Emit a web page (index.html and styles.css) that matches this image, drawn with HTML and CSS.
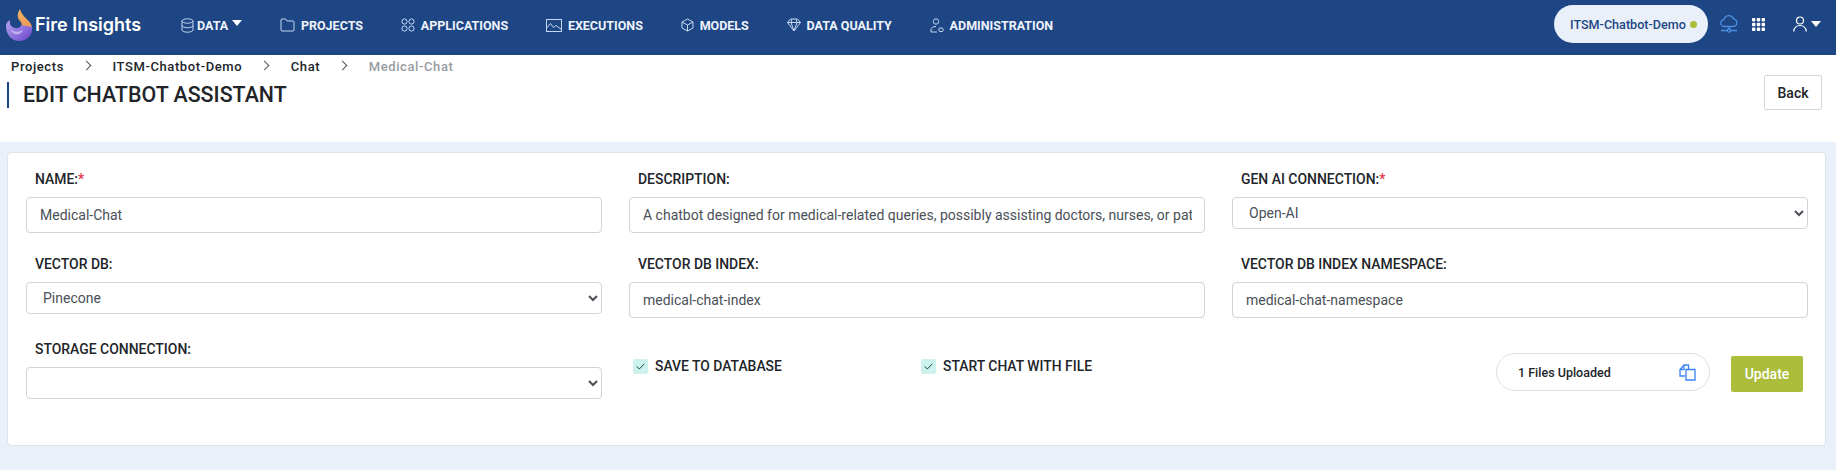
FILE: index.html
```html
<!DOCTYPE html>
<html lang="en">
<head>
<meta charset="utf-8">
<title>Fire Insights</title>
<link rel="stylesheet" href="styles.css">
</head>
<body>
<nav class="navbar">
  <a class="brand">
    <svg class="brand-mark" width="28" height="34" viewBox="0 0 28 34">
      <defs>
        <linearGradient id="fl" x1="0" y1="0" x2="0" y2="1"><stop offset="0" stop-color="#f5b65f"/><stop offset="1" stop-color="#e8935a"/></linearGradient>
        <linearGradient id="pu" x1="0" y1="0" x2="1" y2="1"><stop offset="0" stop-color="#b9a5f2"/><stop offset="1" stop-color="#6a45c9"/></linearGradient>
      </defs>
      <path d="M15 1c-3 5-3 9 0 12 3 3 2 7-1 9 6 1 13 1 13-1 1-8-10-11-12-20z" fill="url(#fl)"/>
      <path d="M1 18c0-3 2-5 4-6-1 4 1 7 5 8 3 1 6-1 6-3l11 2c1 8-5 14-13 14C6 33 1 26 1 18z" fill="url(#pu)"/>
      <path d="M5 21c3 3 8 4 13 1-2 5-9 7-13-1z" fill="#d3c6f7" opacity=".75"/>
    </svg>
    <span class="brand-name">Fire Insights</span>
  </a>
  <ul class="nav-menu">
    <li class="nav-item nav-item-data">
      <svg class="nav-icon" width="13" height="15" viewBox="0 0 13 15"><ellipse cx="6.5" cy="3" rx="5.5" ry="2.2"/><path d="M1 3v9c0 1.3 2.5 2.2 5.5 2.2S12 13.300 12 12V3M1 7.500c0 1.300 2.500 2.200 5.500 2.200S12 8.800 12 7.500"/></svg>
      <span>DATA</span><i class="caret caret-data"></i>
    </li>
    <li class="nav-item">
      <svg class="nav-icon" width="15" height="14" viewBox="0 0 15 14"><path d="M1 3V2q0-1 1-1h3.500l1.500 2h6q1 0 1 1v8q0 1-1 1H2q-1 0-1-1z"/></svg>
      <span>PROJECTS</span>
    </li>
    <li class="nav-item">
      <svg class="nav-icon" width="14" height="14" viewBox="0 0 14 14"><circle cx="3.500" cy="3.500" r="2.600"/><circle cx="10.500" cy="3.500" r="2.600"/><circle cx="3.500" cy="10.500" r="2.600"/><circle cx="10.500" cy="10.500" r="2.600"/></svg>
      <span>APPLICATIONS</span>
    </li>
    <li class="nav-item">
      <svg class="nav-icon" width="16" height="13" viewBox="0 0 16 13"><rect x=".5" y=".5" width="15" height="12"/><path d="M.5 9l4-4.500 3 4 2.500-2 5.500 4"/></svg>
      <span>EXECUTIONS</span>
    </li>
    <li class="nav-item">
      <svg class="nav-icon" width="13" height="14" viewBox="0 0 13 14"><path d="M6.500 1l5.500 3v6l-5.500 3L1 10V4zM1 4l5.500 3L12 4M6.500 7v6"/></svg>
      <span>MODELS</span>
    </li>
    <li class="nav-item">
      <svg class="nav-icon" width="14" height="14" viewBox="0 0 14 14"><path d="M3.500 1h7L13.500 4.500 7 13 .5 4.500zM.5 4.500h13M5 1L4 4.500 7 13l3-8.500L9 1"/></svg>
      <span>DATA QUALITY</span>
    </li>
    <li class="nav-item">
      <svg class="nav-icon" width="14" height="15" viewBox="0 0 14 15"><circle cx="6" cy="3.500" r="2.700"/><path d="M1 14v-2q0-3.500 5-3.500M1 14h6"/><rect x="9" y="10" width="4" height="3.500" rx="1"/></svg>
      <span>ADMINISTRATION</span>
    </li>
  </ul>
  <div class="nav-right">
    <div class="project-pill"><span>ITSM-Chatbot-Demo</span><i class="status-dot"></i></div>
    <svg class="cloud" width="18" height="20" viewBox="0 0 18 20"><path d="M5 12.500H4.500a3.500 3.500 0 0 1-.5-7A5 5 0 0 1 13.500 4.800a3.900 3.900 0 0 1 0 7.700H13"/><path d="M5 12.500h8M9 12.500V16M1 16.500h6M11 16.500h6"/><circle cx="9" cy="16.500" r="1.600"/></svg>
    <svg class="apps" width="13" height="13" viewBox="0 0 13 13"><g fill="#fff"><rect width="3.400" height="3.400" rx=".8"/><rect x="4.800" width="3.400" height="3.400" rx=".8"/><rect x="9.600" width="3.400" height="3.400" rx=".8"/><rect y="4.800" width="3.400" height="3.400" rx=".8"/><rect x="4.800" y="4.800" width="3.400" height="3.400" rx=".8"/><rect x="9.600" y="4.800" width="3.400" height="3.400" rx=".8"/><rect y="9.600" width="3.400" height="3.400" rx=".8"/><rect x="4.800" y="9.600" width="3.400" height="3.400" rx=".8"/><rect x="9.600" y="9.600" width="3.400" height="3.400" rx=".8"/></g></svg>
    <div class="user">
      <svg width="14" height="16" viewBox="0 0 14 16"><circle cx="7" cy="4.500" r="3.500"/><path d="M.7 15.500c.5-4 3-6 6.300-6s5.800 2 6.300 6"/></svg>
      <i class="caret"></i>
    </div>
  </div>
</nav>

<header class="page-head">
  <ol class="crumbs">
    <li>Projects</li>
    <li>ITSM-Chatbot-Demo</li>
    <li>Chat</li>
    <li class="current">Medical-Chat</li>
  </ol>
  <div class="title-row">
    <h1>EDIT CHATBOT ASSISTANT</h1>
    <button class="btn-back" type="button">Back</button>
  </div>
</header>

<main class="content">
  <form class="card">
    <div class="field">
      <label>NAME:<b>*</b></label>
      <input class="control tall" type="text" value="Medical-Chat">
    </div>
    <div class="field">
      <label>DESCRIPTION:</label>
      <input class="control tall" type="text" value="A chatbot designed for medical-related queries, possibly assisting doctors, nurses, or patients with information.">
    </div>
    <div class="field">
      <label>GEN AI CONNECTION:<b>*</b></label>
      <select class="control"><option>Open-AI</option></select>
    </div>
    <div class="field">
      <label>VECTOR DB:</label>
      <select class="control"><option>Pinecone</option></select>
    </div>
    <div class="field">
      <label>VECTOR DB INDEX:</label>
      <input class="control tall" type="text" value="medical-chat-index">
    </div>
    <div class="field">
      <label>VECTOR DB INDEX NAMESPACE:</label>
      <input class="control tall" type="text" value="medical-chat-namespace">
    </div>
    <div class="field">
      <label>STORAGE CONNECTION:</label>
      <select class="control"><option></option></select>
    </div>
    <div class="checks">
      <div class="check"><span class="box"><svg width="9" height="7" viewBox="0 0 9 7"><path d="M.7 3.500l2.600 2.500L8.300.8"/></svg></span><span>SAVE TO DATABASE</span></div>
      <div class="check"><span class="box"><svg width="9" height="7" viewBox="0 0 9 7"><path d="M.7 3.500l2.600 2.500L8.300.8"/></svg></span><span>START CHAT WITH FILE</span></div>
    </div>
    <div class="actions">
      <div class="files">
        <span>1 Files Uploaded</span>
        <svg width="17" height="17" viewBox="0 0 17 17"><path d="M6 12H1V5.500L5 1h4.500v4"/><path d="M1 5.500h4V1"/><path d="M7 5.500h4l1 0h4V16H7z"/></svg>
      </div>
      <button class="btn-update" type="button">Update</button>
    </div>
  </form>
</main>
</body>
</html>
```

FILE: styles.css
```css
* { box-sizing: border-box; }
html, body { margin: 0; height: 100%; }
body {
  background: #eaf0f9;
  font-family: Roboto, "Liberation Sans", sans-serif;
  color: #212529;
  overflow: hidden;
}

/* top bar */
.navbar {
  height: 55px;
  background: #1e4684;
  display: flex;
  align-items: center;
  padding: 0 15px 0 5px;
  color: #fff;
}
.brand { display: flex; align-items: center; width: 176px; height: 100%; padding-bottom: 6px; }
.brand-mark { flex: none; }
.brand-name {
  margin-left: 2px;
  font-family: Inter, "Open Sans", sans-serif;
  font-weight: 600;
  font-size: 18px;
  white-space: nowrap;
}
.nav-menu {
  list-style: none;
  margin: 0;
  padding: 0 0 5px;
  display: flex;
  align-items: center;
  gap: 37.8px;
}
.nav-item {
  display: flex;
  align-items: center;
  gap: 6px;
  font-size: 12.5px;
  font-weight: 700;
  white-space: nowrap;
  color: #eef3fb;
}
.nav-item-data { gap: 3px; }
.nav-icon { fill: none; stroke: #c4d8f2; stroke-width: 1; flex: none; }
.caret {
  display: inline-block;
  width: 0; height: 0;
  border-left: 5px solid transparent;
  border-right: 5px solid transparent;
  border-top: 6px solid #fff;
}
.caret-data { margin: 0 0 4px 1px; }
.nav-right { margin-left: auto; display: flex; align-items: center; padding-bottom: 7px; }
.project-pill {
  width: 154px;
  height: 38px;
  border-radius: 19px;
  background: #eaf0f9;
  color: #1e4684;
  font-size: 12.6px;
  font-weight: 500;
  display: flex;
  align-items: center;
  padding-left: 16px;
  gap: 4px;
  white-space: nowrap;
}
.status-dot { width: 7px; height: 7px; border-radius: 50%; background: #abbd3b; flex: none; }
.cloud { margin-left: 12px; fill: none; stroke: #4a8fe0; stroke-width: 1.300; }
.apps { margin-left: 14px; }
.user { margin-left: 28px; display: flex; align-items: flex-start; gap: 4px; }
.user svg { fill: none; stroke: #fff; stroke-width: 1.200; }
.user .caret { margin-top: 5px; }

/* page heading */
.page-head {
  height: 87px;
  background: #fff;
  padding: 4px 14px 0 7px;
}
.crumbs {
  list-style: none;
  margin: 0;
  padding: 0 0 0 4px;
  display: flex;
  font-size: 13px;
  font-weight: 500;
  letter-spacing: .6px;
  line-height: 15px;
  color: #212529;
}
.crumbs li + li::before {
  content: "";
  display: inline-block;
  width: 6px; height: 6px;
  border-top: 1px solid #555;
  border-right: 1px solid #555;
  transform: rotate(45deg);
  margin: 0 22.500px 2px 19px;
}
.crumbs .current { color: #979ca3; }
.title-row {
  display: flex;
  justify-content: space-between;
  align-items: flex-start;
  margin-top: 1px;
}
h1 {
  margin: 7px 0 0;
  height: 26px;
  border-left: 2px solid #1e4684;
  padding-left: 14px;
  font-size: 21.4px;
  font-weight: 500;
  line-height: 25px;
  color: #212529;
}
.btn-back {
  width: 58px;
  height: 35px;
  background: #fff;
  border: 1px solid #d2d6de;
  border-radius: 2px;
  font: 500 14px Roboto, sans-serif;
  color: #212529;
}

/* form */
.content { padding: 10px 10px 0 7px; }
.card {
  height: 294px;
  background: #fff;
  border: 1px solid #dfe3ea;
  border-radius: 4px;
  padding: 16px 18px 0 18px;
  display: grid;
  grid-template-columns: repeat(3, 576px);
  grid-auto-rows: 85px;
  column-gap: 27px;
}
.field label {
  display: block;
  height: 20px;
  margin: 0 0 8px 9px;
  font-size: 13.950px;
  font-weight: 500;
  line-height: 20px;
  color: #212529;
}
.field b { color: #e0344c; font-weight: 500; }
.control {
  display: block;
  width: 100%;
  height: 32px;
  background: #fff;
  border: 1px solid #ced4da;
  border-radius: 4px;
  font: 400 14px Roboto, sans-serif;
  color: #495057;
  padding: 0 4px 0 12px;
}
.control.tall { height: 36px; padding: 0 12px 0 13px; }
.checks {
  display: grid;
  grid-template-columns: 288px 1fr;
  padding: 20px 0 0 4px;
  align-items: start;
}
.check {
  display: flex;
  align-items: center;
  gap: 7px;
  font-size: 13.9px;
  font-weight: 500;
  color: #212529;
  line-height: 15px;
}
.box {
  width: 15px; height: 15px;
  border-radius: 2px;
  background: #cdf1ec;
  display: flex;
  align-items: center;
  justify-content: center;
}
.box svg { fill: none; stroke: #0d4f47; stroke-width: 1; }
.actions {
  display: flex;
  justify-content: flex-end;
  align-items: flex-start;
  gap: 21px;
  padding: 14px 5px 0 0;
}
.files {
  width: 214px;
  height: 38px;
  border: 1px solid #dcdfe4;
  border-radius: 19px;
  display: flex;
  align-items: center;
  justify-content: space-between;
  padding: 0 13px 0 21px;
  font-size: 12.5px;
  font-weight: 500;
  color: #212529;
}
.files svg { fill: none; stroke: #3b82f6; stroke-width: 1.300; }
.btn-update {
  width: 72px;
  height: 36px;
  margin-top: 3px;
  background: #abbd3b;
  border: 0;
  border-radius: 2px;
  font: 500 14px Roboto, sans-serif;
  color: #fff;
}
```
